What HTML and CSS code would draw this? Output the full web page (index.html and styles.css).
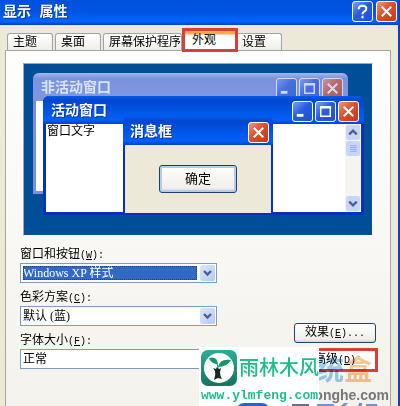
FILE: index.html
```html
<!DOCTYPE html>
<html lang="zh-CN">
<head>
    <meta charset="UTF-8">
    <meta name="viewport" content="width=device-width, initial-scale=1.0">
    <title>显示 属性</title>
    <link rel="stylesheet" href="styles.css">
</head>
<body>
    <div class="dialog">
        <header class="titlebar">
            <h1 class="title">显示 属性</h1>
            <button type="button" class="win-btn" aria-label="帮助">
                <svg viewBox="0 0 20 20"><path d="M6 7.500Q6 4 10 4Q14 4 14 7.200Q14 9 11.500 10.200Q10 11 10 13M10 14.600V17" fill="none" stroke="#fff" stroke-width="2.200"/></svg>
            </button>
            <button type="button" class="win-btn close" aria-label="关闭">
                <svg viewBox="0 0 20 20"><path d="M5 5L15 15M15 5L5 15" stroke="#fff" stroke-width="2.200"/></svg>
            </button>
        </header>

        <nav class="tabs">
            <button type="button" class="tab">主题</button>
            <button type="button" class="tab">桌面</button>
            <button type="button" class="tab">屏幕保护程序</button>
            <button type="button" class="tab active">外观</button>
            <button type="button" class="tab">设置</button>
        </nav>

        <main class="panel">
            <div class="preview">
                <section class="window inactive">
                    <div class="window-bar">
                        <h2 class="title">非活动窗口</h2>
                        <button type="button" class="win-btn" aria-label="最小化"><svg viewBox="0 0 20 20"><path d="M4 14H11" stroke="#fff" stroke-width="3"/></svg></button>
                        <button type="button" class="win-btn" aria-label="最大化"><svg viewBox="0 0 20 20"><path d="M5 5H15V15H5ZM4 6H16" fill="none" stroke="#fff" stroke-width="1.500"/></svg></button>
                        <button type="button" class="win-btn close" aria-label="关闭"><svg viewBox="0 0 20 20"><path d="M5 5L15 15M15 5L5 15" stroke="#fff" stroke-width="2.200"/></svg></button>
                    </div>
                    <div class="window-body"></div>
                </section>

                <section class="window current">
                    <div class="window-bar">
                        <h2 class="title">活动窗口</h2>
                        <button type="button" class="win-btn" aria-label="最小化"><svg viewBox="0 0 20 20"><path d="M4 14H11" stroke="#fff" stroke-width="3"/></svg></button>
                        <button type="button" class="win-btn" aria-label="最大化"><svg viewBox="0 0 20 20"><path d="M5 5H15V15H5ZM4 6H16" fill="none" stroke="#fff" stroke-width="1.500"/></svg></button>
                        <button type="button" class="win-btn close" aria-label="关闭"><svg viewBox="0 0 20 20"><path d="M5 5L15 15M15 5L5 15" stroke="#fff" stroke-width="2.200"/></svg></button>
                    </div>
                    <div class="window-body">
                        <p class="window-text">窗口文字</p>
                        <div class="scrollbar">
                            <svg class="scroll-btn" viewBox="0 0 14 16"><path d="M3 10L7 6L11 10" fill="none" stroke="#4d6185" stroke-width="2.400"/></svg>
                            <svg class="scroll-btn" viewBox="0 0 14 16"><path d="M4 5H11M4 7H11M4 9H11M4 11H11" stroke="#93aee8"/></svg>
                            <svg class="scroll-btn last" viewBox="0 0 14 16"><path d="M3 6L7 10L11 6" fill="none" stroke="#4d6185" stroke-width="2.400"/></svg>
                        </div>
                    </div>
                </section>

                <section class="window message">
                    <div class="window-bar">
                        <h2 class="title">消息框</h2>
                        <button type="button" class="win-btn close" aria-label="关闭"><svg viewBox="0 0 20 20"><path d="M5 5L15 15M15 5L5 15" stroke="#fff" stroke-width="2.200"/></svg></button>
                    </div>
                    <div class="window-body">
                        <button type="button" class="push ok">确定</button>
                    </div>
                </section>
            </div>

            <form class="settings">
                <div class="fields">
                    <div class="field">
                        <label for="style">窗口和按钮<span class="key">(<u>W</u>):</span></label>
                        <div class="combo selected">
                            <select id="style"><option>Windows XP 样式</option></select>
                            <svg class="arrow" viewBox="0 0 15 16"><path d="M4 6L7.500 9.500L11 6" fill="none" stroke="#4d6185" stroke-width="2.400"/></svg>
                        </div>
                    </div>
                    <div class="field">
                        <label for="scheme">色彩方案<span class="key">(<u>C</u>):</span></label>
                        <div class="combo">
                            <select id="scheme"><option>默认 (蓝)</option></select>
                            <svg class="arrow" viewBox="0 0 15 16"><path d="M4 6L7.500 9.500L11 6" fill="none" stroke="#4d6185" stroke-width="2.400"/></svg>
                        </div>
                    </div>
                    <div class="field">
                        <label for="size">字体大小<span class="key">(<u>F</u>):</span></label>
                        <div class="combo">
                            <select id="size"><option>正常</option></select>
                            <svg class="arrow" viewBox="0 0 15 16"><path d="M4 6L7.500 9.500L11 6" fill="none" stroke="#4d6185" stroke-width="2.400"/></svg>
                        </div>
                    </div>
                </div>
                <div class="actions">
                    <button type="button" class="push">效果<span class="key">(<u>E</u>)...</span></button>
                    <button type="button" class="push marked">高级<span class="key">(<u>D</u>)</span></button>
                </div>
            </form>
        </main>

        <div class="site-mark">
            <div class="mark-name"><span class="blue">统</span><span class="orange">盒</span></div>
            <div class="mark-url">onghe.com</div>
            <svg class="mark-foot" viewBox="0 0 160 3">
                <path d="M0 3Q2 0 7 0H23Q28 0 30 3Z" fill="#2c62c8"/>
                <path d="M54 1H71V3H54Z" fill="#66718c"/>
                <path d="M79 1H96V3H79ZM106 0H110L107 3H103ZM121 0H124V3H120ZM128 1H139V3H128Z" fill="#7193d2"/>
            </svg>
        </div>

        <div class="badge">
            <div class="badge-top">
                <svg class="badge-logo" viewBox="0 0 36 36">
                    <defs>
                        <linearGradient id="tile" x1="0" y1="0" x2="0" y2="1">
                            <stop offset="0" stop-color="#2fab94"/>
                            <stop offset="1" stop-color="#14745f"/>
                        </linearGradient>
                    </defs>
                    <rect width="36" height="36" rx="7" fill="url(#tile)"/>
                    <circle cx="18" cy="18" r="15" fill="#fff"/>
                    <path d="M8 8Q16 6 17 14Q10 14 8 8Z" fill="#159568"/>
                    <path d="M17 17Q19 8 30 10Q26 17 17 17Z" fill="#159568"/>
                    <path d="M16 13L17 18" stroke="#159568"/>
                    <path d="M12 18L15 19L16 17L18 19L20 18L19 22Q19 26 21 29L17 28L13 30Q15 25 14 21Z" fill="#172824"/>
                </svg>
                <span class="badge-name">雨林木风</span>
            </div>
            <a class="badge-url" href="#">www.ylmfeng.com</a>
        </div>
    </div>
</body>
</html>
```
FILE: styles.css
```css
* {
    box-sizing: border-box;
}
body {
    margin: 0;
    font-family: "Liberation Serif", "Noto Sans CJK SC", sans-serif;
    font-size: 12px;
    color: #000;
}
button,
select {
    font: inherit;
    color: inherit;
    padding: 0;
}
h1, h2, p {
    margin: 0;
}
.dialog {
    position: relative;
    display: flex;
    flex-direction: column;
    height: 100vh;
    min-height: 400px;
    overflow: hidden;
    background: #ece9d8;
    border-right: 2px solid #0a42cf;
}

/* Title bars */
.titlebar {
    display: flex;
    align-items: center;
    gap: 3px;
    flex: none;
    height: 25px;
    margin-right: -2px;
    padding: 0 3px 2px;
    background: linear-gradient(#0050dc, #0055e5 50%, #0066ff 85%, #0040c4);
}
.title {
    flex: 1;
    font-family: "Liberation Mono", "Noto Sans CJK SC", monospace;
    font-size: 14px;
    line-height: 20px;
    font-weight: bold;
    color: #fff;
    text-shadow: 1px 1px #0a3a9c;
    white-space: nowrap;
}
.win-btn {
    flex: none;
    width: 21px;
    height: 21px;
    border: 1px solid #fff;
    border-radius: 3px;
    background: linear-gradient(135deg, #7aa0f2, #2a5ce0 45%, #1d4fd0);
}
.win-btn svg {
    display: block;
    width: 19px;
    height: 19px;
}
.win-btn.close {
    background: linear-gradient(135deg, #f0967c, #d9502c 45%, #c33c12);
}

/* Tabs */
.tabs {
    display: flex;
    align-items: flex-end;
    flex: none;
    height: 25px;
    padding: 0 7px;
}
.tab {
    height: 17px;
    margin-right: 2px;
    padding: 0 15px 0 5px;
    border: 1px solid #9aa5a8;
    border-bottom: 0;
    border-radius: 3px 3px 0 0;
    background: linear-gradient(#fff, #eeede5);
    line-height: 17px;
    white-space: nowrap;
}
.tab:nth-child(3) {
    padding-right: 0;
    margin-right: 0;
}
.tab.active {
    position: relative;
    z-index: 1;
    height: 24px;
    margin: 0 -2px -2px 0;
    padding: 0 19px 0 7px;
    border: 3px solid #d6403a;
    border-radius: 0;
    background: linear-gradient(#f9a94a 3px, #fff 4px);
}

/* Page */
.panel {
    flex: 1;
    margin: 0 7px 0 5px;
    border: 1px solid #a3a6a0;
    border-bottom: 0;
    background: linear-gradient(#fefefe, #f3f2ec);
}
.preview {
    position: relative;
    height: 173px;
    margin: 12px 17px 0;
    border: 1px solid #aca899;
    border-right-color: #fff;
    border-bottom-color: #fff;
    background: #004e98;
}
.window {
    position: absolute;
    display: flex;
    flex-direction: column;
    padding: 0 3px 3px;
    border-radius: 6px 6px 0 0;
    background: #0831c0;
}
.window-bar {
    display: flex;
    align-items: center;
    gap: 2px;
    flex: none;
    height: 28px;
    margin: 0 -3px;
    padding: 2px 5px 0 8px;
    border-radius: 6px 6px 0 0;
    background: linear-gradient(#0a5be6, #0046d0 15%, #0054e3 50%, #0060f8 85%, #0042cc);
}
.window-body {
    display: flex;
    flex: 1;
    background: #fff;
}
.inactive {
    top: 9px;
    left: 9px;
    right: 24px;
    height: 121px;
    background: #7b8fdc;
}
.inactive .window-bar {
    background: linear-gradient(#a3b5ec, #7b93dd 20%, #8098e0);
}
.inactive .title {
    color: #d8e4f8;
    text-shadow: none;
}
.inactive .win-btn {
    opacity: 0.65;
}
.current {
    top: 32px;
    left: 19px;
    right: 8px;
    height: 119px;
}
.window-text {
    flex: 1;
    padding-left: 1px;
    line-height: 15px;
}
.scrollbar {
    display: flex;
    flex-direction: column;
    gap: 1px;
    width: 16px;
    padding: 1px;
    background: #f5f4f0;
}
.scroll-btn {
    width: 14px;
    height: 15px;
    border-radius: 2px;
    background: #c5d5fc;
}
.scroll-btn.last {
    margin-top: auto;
}
.message {
    top: 53px;
    left: 99px;
    width: 150px;
    height: 98px;
    padding: 0 2px 2px;
}
.message .window-bar {
    margin: 0 -2px;
    padding: 2px 4px 0 7px;
}
.message .window-body {
    align-items: center;
    justify-content: center;
    background: #ece9d8;
}
.push {
    width: 82px;
    height: 20px;
    border: 1px solid #1c4373;
    border-radius: 3px;
    background: linear-gradient(#fff, #f0efe8 85%, #d8d2c4);
    line-height: 16px;
}
.push.ok {
    width: 78px;
    height: 28px;
    box-shadow: inset 0 0 0 2px #b3cbf0;
    font-size: 13px;
}

/* Settings */
.settings {
    display: flex;
    justify-content: space-between;
    padding: 9px 12px 0 14px;
}
.fields {
    display: flex;
    flex-direction: column;
    gap: 5px;
    flex: 0 0 197px;
}
.field label {
    display: block;
    height: 18px;
    line-height: 18px;
}
.key {
    font-family: "Liberation Mono", monospace;
    font-size: 10px;
}
.combo {
    display: flex;
    height: 20px;
    padding: 1px;
    border: 1px solid #7f9db9;
    background: #fff;
}
.combo select {
    flex: 1;
    min-width: 0;
    height: 14px;
    margin: 1px 3px 1px 1px;
    border: 0;
    appearance: none;
    background: #fff;
    line-height: 14px;
}
.combo.selected select {
    background: #316ac5;
    color: #fff;
    outline: 1px dotted #24406e;
    outline-offset: -1px;
}
.arrow {
    flex: none;
    width: 15px;
    height: 16px;
    border-radius: 2px;
    background: linear-gradient(135deg, #dbe5fe, #b5c9f8);
}
.actions {
    display: flex;
    flex-direction: column;
    align-items: flex-end;
    gap: 5px;
    padding-top: 78px;
}
.actions .push {
    margin-right: 2px;
}
.actions .marked {
    width: 86px;
    height: 24px;
    margin-right: 0;
    border: 3px solid #d6403a;
    border-radius: 0;
    background: #fff;
}

/* Site marks over the corner */
.site-mark {
    position: absolute;
    right: 0;
    bottom: 0;
    width: 160px;
    pointer-events: none;
}
.mark-name {
    padding-left: 78px;
    font-size: 28px;
    line-height: 32px;
    font-weight: bold;
    opacity: 0.65;
    mix-blend-mode: multiply;
    white-space: nowrap;
}
.mark-name .blue {
    color: #62b2ee;
}
.mark-name .orange {
    color: #f9a850;
}
.mark-url {
    padding-right: 9px;
    font-family: "Liberation Sans", sans-serif;
    font-size: 14px;
    line-height: 16px;
    font-weight: bold;
    color: #76767c;
    text-align: right;
}
.mark-foot {
    position: relative;
    z-index: 1;
    display: block;
    width: 160px;
    height: 3px;
}
.badge {
    position: absolute;
    right: 79px;
    bottom: 0;
    width: 120px;
    height: 59px;
    padding: 2px;
    background: #fff;
}
.badge-top {
    display: flex;
    align-items: center;
    gap: 2px;
    height: 38px;
}
.badge-logo {
    flex: none;
    width: 36px;
    height: 36px;
}
.badge-name {
    font-size: 20px;
    line-height: 38px;
    font-weight: 500;
    color: #20bd86;
    white-space: nowrap;
}
.badge-url {
    display: block;
    font-family: "Liberation Mono", monospace;
    font-size: 13px;
    line-height: 18px;
    font-weight: bold;
    color: #20bd86;
    text-decoration: none;
}
```
